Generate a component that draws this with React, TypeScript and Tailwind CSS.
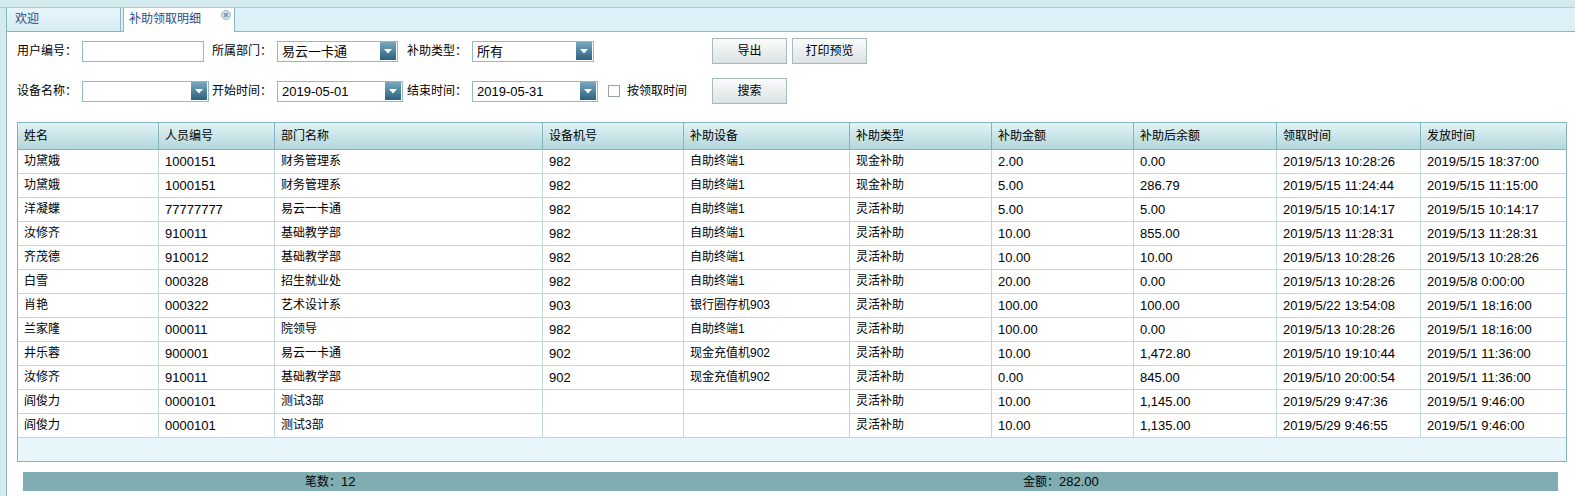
import * as React from 'react';

const rows = [
  ['功黛娥', '1000151', '财务管理系', '982', '自助终端1', '现金补助', '2.00', '0.00', '2019/5/13 10:28:26', '2019/5/15 18:37:00'],
  ['功黛娥', '1000151', '财务管理系', '982', '自助终端1', '现金补助', '5.00', '286.79', '2019/5/15 11:24:44', '2019/5/15 11:15:00'],
  ['洋凝蝶', '77777777', '易云一卡通', '982', '自助终端1', '灵活补助', '5.00', '5.00', '2019/5/15 10:14:17', '2019/5/15 10:14:17'],
  ['汝修齐', '910011', '基础教学部', '982', '自助终端1', '灵活补助', '10.00', '855.00', '2019/5/13 11:28:31', '2019/5/13 11:28:31'],
  ['齐茂德', '910012', '基础教学部', '982', '自助终端1', '灵活补助', '10.00', '10.00', '2019/5/13 10:28:26', '2019/5/13 10:28:26'],
  ['白雪', '000328', '招生就业处', '982', '自助终端1', '灵活补助', '20.00', '0.00', '2019/5/13 10:28:26', '2019/5/8 0:00:00'],
  ['肖艳', '000322', '艺术设计系', '903', '银行圈存机903', '灵活补助', '100.00', '100.00', '2019/5/22 13:54:08', '2019/5/1 18:16:00'],
  ['兰家隆', '000011', '院领导', '982', '自助终端1', '灵活补助', '100.00', '0.00', '2019/5/13 10:28:26', '2019/5/1 18:16:00'],
  ['井乐蓉', '900001', '易云一卡通', '902', '现金充值机902', '灵活补助', '10.00', '1,472.80', '2019/5/10 19:10:44', '2019/5/1 11:36:00'],
  ['汝修齐', '910011', '基础教学部', '902', '现金充值机902', '灵活补助', '0.00', '845.00', '2019/5/10 20:00:54', '2019/5/1 11:36:00'],
  ['阎俊力', '0000101', '测试3部', '', '', '灵活补助', '10.00', '1,145.00', '2019/5/29 9:47:36', '2019/5/1 9:46:00'],
  ['阎俊力', '0000101', '测试3部', '', '', '灵活补助', '10.00', '1,135.00', '2019/5/29 9:46:55', '2019/5/1 9:46:00'],
];

const headers = ['姓名', '人员编号', '部门名称', '设备机号', '补助设备', '补助类型', '补助金额', '补助后余额', '领取时间', '发放时间'];

const gridCols = 'grid grid-cols-[141px_116px_268px_141px_166px_142px_142px_143px_144px_145px]';

function Label({ text }: { text: string }) {
  return <div className="w-[65px] shrink-0 text-[12px] leading-[20px]">{text}</div>;
}

function DropBtn() {
  return (
    <div className="w-[16px] h-[18px] mr-[1px] shrink-0 flex items-center justify-center bg-gradient-to-b from-[#78a8c0] to-[#2b627f]">
      <svg width="8" height="5" viewBox="0 0 8 5">
        <path d="M0 0H8L4 4.5Z" fill="#fff" />
      </svg>
    </div>
  );
}

function Select({ w, value }: { w: string; value: string }) {
  return (
    <div className={`${w} h-[21px] shrink-0 border border-[#8fbcc4] bg-white flex items-center`}>
      <div className="flex-1 pl-[4px] text-[13px] leading-[19px] truncate">{value}</div>
      <DropBtn />
    </div>
  );
}

function Btn({ text }: { text: string }) {
  return (
    <div className="w-[75px] h-[26px] shrink-0 border border-[#a8b9bd] bg-gradient-to-b from-[#fbfbfb] to-[#dce3e5] flex items-center justify-center text-[12px]">
      {text}
    </div>
  );
}

function App() {
  return (
    <div className="w-[1575px] h-[496px] bg-[#d3eaee] flex flex-col overflow-hidden text-black font-['Liberation_Sans','Noto_Sans_CJK_SC',sans-serif]">
      <div className="h-[8px] shrink-0 border-b border-[#a9d0d8]" />
      <div className="flex flex-1">
        <div className="w-[7px] shrink-0 border-r border-[#8ab8c0]" />
        <div className="flex-1 flex flex-col bg-white">
          {/* tabs */}
          <div className="flex h-[24px] shrink-0 bg-[#dcf0f7]">
            <div className="w-[114px] border-r border-b border-[#8ab8c0] bg-gradient-to-b from-[#e6f5fa] to-[#d6edf4] pl-[8px] text-[12px] leading-[23px] text-[#1d4c8a]">
              欢迎
            </div>
            <div className="w-[2px] border-b border-[#8ab8c0]" />
            <div className="relative w-[112px] border-l border-r border-[#8ab8c0] bg-white pl-[5px] text-[12px] leading-[23px] text-[#1d4c8a]">
              补助领取明细
              <svg className="absolute right-[3px] top-[2px]" width="10" height="10" viewBox="0 0 10 10">
                <circle cx="5" cy="5" r="4.5" fill="#d2e3ea" stroke="#9db7c6" />
                <path d="M3 3L7 7M7 3L3 7" stroke="#6f90a8" strokeWidth="1.4" />
              </svg>
            </div>
            <div className="flex-1 border-b border-[#8ab8c0]" />
          </div>

          {/* form row 1 */}
          <div className="flex items-center h-[26px] mt-[6px] pl-[10px]">
            <Label text="用户编号：" />
            <div className="w-[122px] h-[21px] shrink-0 border border-[#8fbcc4]" />
            <div className="w-[8px] shrink-0" />
            <Label text="所属部门：" />
            <Select w="w-[121px]" value="易云一卡通" />
            <div className="w-[9px] shrink-0" />
            <Label text="补助类型：" />
            <Select w="w-[122px]" value="所有" />
            <div className="w-[118px] shrink-0" />
            <Btn text="导出" />
            <div className="w-[5px] shrink-0" />
            <Btn text="打印预览" />
          </div>

          {/* form row 2 */}
          <div className="flex items-center h-[26px] mt-[14px] pl-[10px]">
            <Label text="设备名称：" />
            <Select w="w-[127px]" value="" />
            <div className="w-[3px] shrink-0" />
            <Label text="开始时间：" />
            <Select w="w-[126px]" value="2019-05-01" />
            <div className="w-[4px] shrink-0" />
            <Label text="结束时间：" />
            <Select w="w-[126px]" value="2019-05-31" />
            <div className="w-[114px] shrink-0 flex items-center pl-[10px]">
              <div className="w-[12px] h-[12px] border border-[#9aa5a8] bg-white" />
              <span className="ml-[7px] text-[12px]">按领取时间</span>
            </div>
            <Btn text="搜索" />
          </div>

          {/* table */}
          <div className="ml-[10px] mt-[18px] w-[1550px] h-[340px] shrink-0 border border-[#86b4ba] flex flex-col">
            <div className={`${gridCols} h-[27px] border-b border-[#86b4ba] bg-gradient-to-b from-[#e2f3f6] to-[#b2d7dc]`}>
              {headers.map((h, i) => (
                <div
                  key={i}
                  className={`pl-[6px] text-[12px] leading-[26px] ${i < headers.length - 1 ? 'border-r border-[#86b4ba]' : ''}`}
                >
                  {h}
                </div>
              ))}
            </div>
            {rows.map((r, ri) => (
              <div key={ri} className={`${gridCols} h-[24px] border-b border-[#c4d6dc]`}>
                {r.map((c, ci) => (
                  <div
                    key={ci}
                    className={`pl-[6px] leading-[23px] whitespace-nowrap overflow-hidden ${/^[\x00-\x7f]*$/.test(c) ? 'text-[13px]' : 'text-[12px]'} ${ci < r.length - 1 ? 'border-r border-[#c4d6dc]' : ''}`}
                  >
                    {c}
                  </div>
                ))}
              </div>
            ))}
            <div className="flex-1 bg-[#e6f6fa]" />
          </div>

          {/* footer */}
          <div className="ml-[16px] mt-[10px] w-[1535px] h-[19px] shrink-0 bg-[#80adb1] flex items-center text-[12px]">
            <div className="w-[1000px] pl-[282px]">笔数：<span className="text-[13px]">12</span></div>
            <div>金额：<span className="text-[13px]">282.00</span></div>
          </div>
        </div>
      </div>
    </div>
  );
}

export default App;
